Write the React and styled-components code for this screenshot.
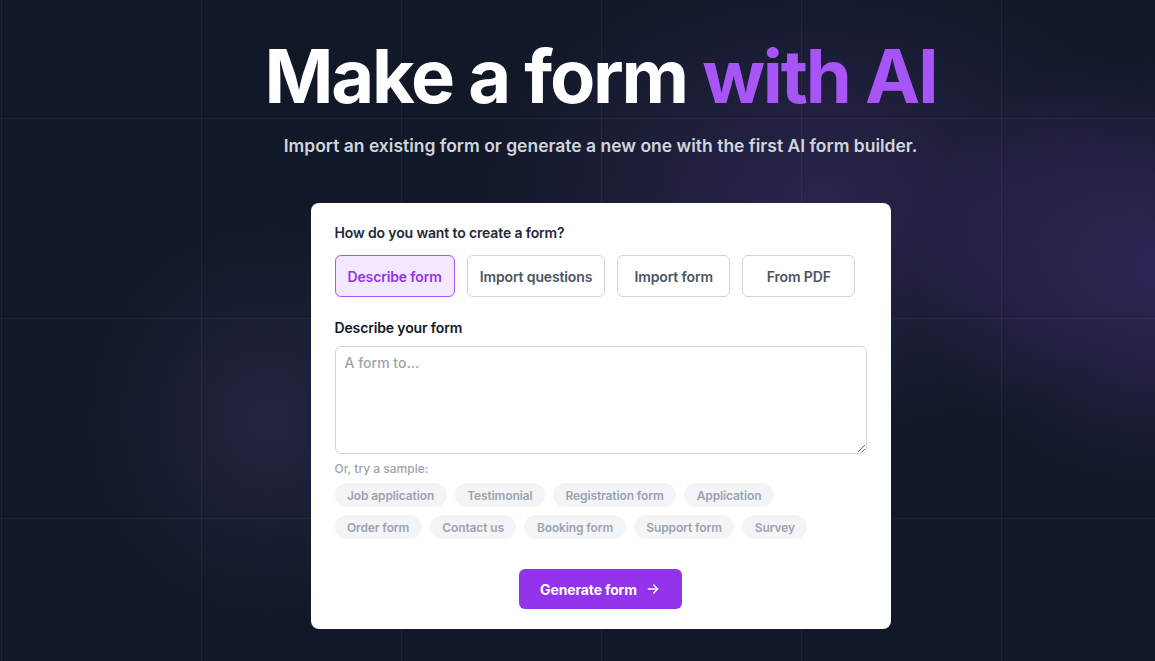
import React, { useState } from "react";
import styled, { createGlobalStyle } from "styled-components";

const GlobalStyle = createGlobalStyle`
  * { box-sizing: border-box; }
  html, body { margin: 0; padding: 0; }
  body {
    background: #111827;
    font-family: Inter, "Noto Sans", sans-serif;
    -webkit-font-smoothing: antialiased;
  }
`;

const Page = styled.main`
  min-height: 661px;
  overflow: hidden;
  display: flex;
  flex-direction: column;
  align-items: center;
  padding: 37px 0 0 46px;
  background-color: #111827;
  background-image:
    linear-gradient(rgba(255, 255, 255, 0.045) 1px, transparent 1px),
    linear-gradient(90deg, rgba(255, 255, 255, 0.045) 1px, transparent 1px),
    radial-gradient(ellipse 330px 300px at 1160px 270px, rgba(72, 50, 125, 0.55), transparent 75%),
    radial-gradient(ellipse 480px 330px at 820px 200px, rgba(66, 48, 112, 0.5), transparent 75%),
    radial-gradient(ellipse 260px 280px at 270px 420px, rgba(58, 50, 96, 0.45), transparent 75%);
  background-size: 200px 200px, 200px 200px, 100% 100%, 100% 100%, 100% 100%;
  background-position: 0 118px, 1px 0, 0 0, 0 0, 0 0;
`;

const Title = styled.h1`
  margin: 0;
  font-size: 74px;
  line-height: 78px;
  font-weight: 700;
  letter-spacing: -0.03em;
  color: #ffffff;
  text-align: center;
`;

const Accent = styled.span`
  color: #a855f7;
`;

const Subtitle = styled.p`
  margin: 19px 0 0;
  font-size: 17.5px;
  line-height: 24px;
  font-weight: 600;
  letter-spacing: 0;
  color: #d1d5db;
`;

const Card = styled.section`
  width: 580px;
  margin-top: 45px;
  background: #ffffff;
  border-radius: 8px;
  padding: 21px 24px 20px;
  display: flex;
  flex-direction: column;
`;

const Label = styled.label`
  font-size: 14px;
  line-height: 18px;
  font-weight: 600;
  color: ${(p) => p.$color || "#1f2937"};
  letter-spacing: -0.01em;
`;

const ModeRow = styled.div`
  display: flex;
  gap: 12px;
  margin-top: 13px;
`;

const ModeButton = styled.button`
  height: 42px;
  min-width: 113px;
  padding: 0 12px;
  border-radius: 6px;
  font-family: inherit;
  font-size: 14px;
  font-weight: 600;
  letter-spacing: -0.01em;
  cursor: pointer;
  border: 1px solid ${(p) => (p.$active ? "#a855f7" : "#d1d5db")};
  background: ${(p) => (p.$active ? "#f3e8ff" : "#ffffff")};
  color: ${(p) => (p.$active ? "#9333ea" : "#4b5563")};
`;

const Section = styled.div`
  display: flex;
  flex-direction: column;
  margin-top: 22px;
`;

const TextArea = styled.textarea`
  margin-top: 9px;
  height: 108px;
  width: 100%;
  resize: vertical;
  border: 1px solid #d1d5db;
  border-radius: 6px;
  padding: 7px 9px;
  font-family: inherit;
  font-size: 14px;
  font-weight: 500;
  color: #111827;
  outline: none;
  &::placeholder {
    color: #9ca3af;
  }
`;

const Hint = styled.p`
  margin: 7px 0 0;
  font-size: 12px;
  line-height: 16px;
  font-weight: 500;
  color: #9ca3af;
`;

const Chips = styled.div`
  display: flex;
  flex-wrap: wrap;
  gap: 8px;
  margin-top: 6px;
  width: 480px;
`;

const Chip = styled.button`
  height: 24px;
  padding: 0 12.5px;
  border: none;
  border-radius: 999px;
  background: #f3f4f6;
  color: #9ca3af;
  font-family: inherit;
  font-size: 12px;
  font-weight: 600;
  letter-spacing: -0.01em;
  cursor: pointer;
`;

const Footer = styled.div`
  display: flex;
  justify-content: center;
  margin-top: 30px;
`;

const Generate = styled.button`
  display: flex;
  align-items: center;
  gap: 8px;
  height: 40px;
  padding: 0 21px;
  border: none;
  border-radius: 6px;
  background: #9333ea;
  color: #ffffff;
  font-family: inherit;
  font-size: 14px;
  font-weight: 700;
  letter-spacing: -0.01em;
  cursor: pointer;
  svg {
    width: 16px;
    height: 16px;
  }
`;

const modes = ["Describe form", "Import questions", "Import form", "From PDF"];
const samples = [
  "Job application",
  "Testimonial",
  "Registration form",
  "Application",
  "Order form",
  "Contact us",
  "Booking form",
  "Support form",
  "Survey",
];

const ArrowRight = () => (
  <svg viewBox="0 0 24 24" fill="none" stroke="currentColor" strokeWidth="2" strokeLinecap="round" strokeLinejoin="round">
    <path d="M5 12h14" />
    <path d="M13 6l6 6-6 6" />
  </svg>
);

const App = () => {
  const [mode, setMode] = useState("Describe form");
  const [text, setText] = useState("");

  return (
    <>
      <GlobalStyle />
      <Page>
        <Title>
          Make a form <Accent>with AI</Accent>
        </Title>
        <Subtitle>Import an existing form or generate a new one with the first AI form builder.</Subtitle>
        <Card>
          <Label>How do you want to create a form?</Label>
          <ModeRow>
            {modes.map((m) => (
              <ModeButton key={m} $active={m === mode} onClick={() => setMode(m)}>
                {m}
              </ModeButton>
            ))}
          </ModeRow>
          <Section>
            <Label $color="#111827">Describe your form</Label>
            <TextArea placeholder="A form to..." value={text} onChange={(e) => setText(e.target.value)} />
            <Hint>Or, try a sample:</Hint>
            <Chips>
              {samples.map((s) => (
                <Chip key={s} onClick={() => setText(s)}>
                  {s}
                </Chip>
              ))}
            </Chips>
          </Section>
          <Footer>
            <Generate>
              Generate form
              <ArrowRight />
            </Generate>
          </Footer>
        </Card>
      </Page>
    </>
  );
};

export default App;
